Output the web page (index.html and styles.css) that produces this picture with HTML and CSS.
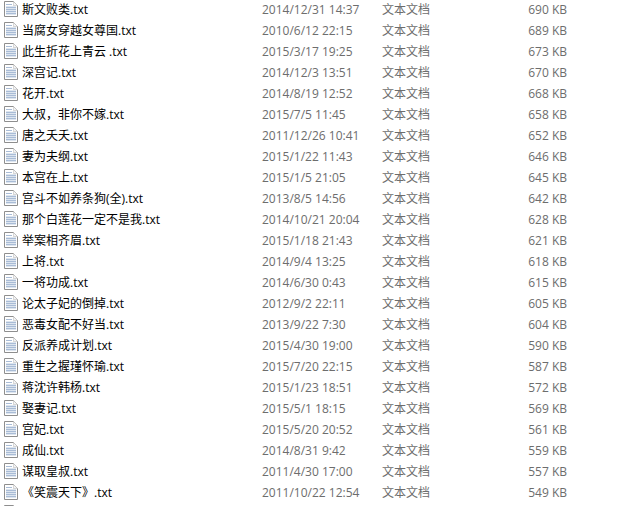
FILE: index.html
```html
<!DOCTYPE html>
<html lang="zh-CN">
<head>
    <meta charset="UTF-8">
    <title>文件列表</title>
    <link rel="stylesheet" href="styles.css">
</head>
<body>
<ul class="file-list" id="files"></ul>

<svg width="0" height="0" class="defs">
    <defs>
        <symbol id="txt-icon" viewBox="0 0 14 16">
            <path d="M0.5 0.5 H9.5 L13.5 4.5 V15.5 H0.5 Z" fill="#fff" stroke="#8e8e8e"/>
            <path d="M9.5 0.5 V4.5 H13.5" fill="#f4f4f4" stroke="#b5b5b5" stroke-dasharray="1 1"/>
            <g stroke="#a9bcd6">
                <line x1="2" y1="3.5" x2="8" y2="3.5"/>
                <line x1="2" y1="6.5" x2="12" y2="6.5"/>
                <line x1="2" y1="8.5" x2="12" y2="8.5"/>
                <line x1="2" y1="10.5" x2="12" y2="10.5"/>
                <line x1="2" y1="12.5" x2="12" y2="12.5"/>
            </g>
            <g stroke="#dde5ef">
                <line x1="2" y1="5.5" x2="12" y2="5.5"/>
                <line x1="2" y1="7.5" x2="12" y2="7.5"/>
                <line x1="2" y1="9.5" x2="12" y2="9.5"/>
                <line x1="2" y1="11.5" x2="12" y2="11.5"/>
                <line x1="2" y1="13.5" x2="12" y2="13.5"/>
            </g>
        </symbol>
    </defs>
</svg>

<script>
    const files = [
        ['斯文败类.txt', '2014/12/31 14:37', '690 KB'],
        ['当腐女穿越女尊国.txt', '2010/6/12 22:15', '689 KB'],
        ['此生折花上青云 .txt', '2015/3/17 19:25', '673 KB'],
        ['深宫记.txt', '2014/12/3 13:51', '670 KB'],
        ['花开.txt', '2014/8/19 12:52', '668 KB'],
        ['大叔，非你不嫁.txt', '2015/7/5 11:45', '658 KB'],
        ['唐之夭夭.txt', '2011/12/26 10:41', '652 KB'],
        ['妻为夫纲.txt', '2015/1/22 11:43', '646 KB'],
        ['本宫在上.txt', '2015/1/5 21:05', '645 KB'],
        ['宫斗不如养条狗(全).txt', '2013/8/5 14:56', '642 KB'],
        ['那个白莲花一定不是我.txt', '2014/10/21 20:04', '628 KB'],
        ['举案相齐眉.txt', '2015/1/18 21:43', '621 KB'],
        ['上将.txt', '2014/9/4 13:25', '618 KB'],
        ['一将功成.txt', '2014/6/30 0:43', '615 KB'],
        ['论太子妃的倒掉.txt', '2012/9/2 22:11', '605 KB'],
        ['恶毒女配不好当.txt', '2013/9/22 7:30', '604 KB'],
        ['反派养成计划.txt', '2015/4/30 19:00', '590 KB'],
        ['重生之握瑾怀瑜.txt', '2015/7/20 22:15', '587 KB'],
        ['蒋沈许韩杨.txt', '2015/1/23 18:51', '572 KB'],
        ['娶妻记.txt', '2015/5/1 18:15', '569 KB'],
        ['宫妃.txt', '2015/5/20 20:52', '561 KB'],
        ['成仙.txt', '2014/8/31 9:42', '559 KB'],
        ['谋取皇叔.txt', '2011/4/30 17:00', '557 KB'],
        ['《笑震天下》.txt', '2011/10/22 12:54', '549 KB'],
        ['', '', '']
    ];

    const list = document.getElementById('files');
    files.forEach(([name, date, size]) => {
        const li = document.createElement('li');
        li.className = 'file-row';
        li.innerHTML =
            '<span class="name"><svg class="icon"><use href="#txt-icon"/></svg><span>' + name + '</span></span>' +
            '<span class="date">' + date + '</span>' +
            '<span class="type">' + (name ? '文本文档' : '') + '</span>' +
            '<span class="size">' + size + '</span>';
        list.appendChild(li);
    });
</script>
</body>
</html>
```

FILE: styles.css
```css
body {
    margin: 0;
    background: #fff;
    font-family: 'Open Sans', 'Noto Sans CJK SC', sans-serif;
    font-size: 12px;
    overflow: hidden;
}

.defs {
    position: absolute;
}

.file-list {
    list-style: none;
    margin: 0;
    padding: 0;
}

.file-row {
    display: grid;
    grid-template-columns: 262px 120px 120px 65px;
    height: 21px;
    line-height: 19px;
    color: #6d6d6d;
    white-space: nowrap;
}

.name {
    display: flex;
    align-items: flex-start;
    gap: 4px;
    padding-left: 4px;
    color: #000;
}

.icon {
    width: 14px;
    height: 16px;
    margin-top: 1px;
    flex-shrink: 0;
}

.size {
    text-align: right;
}
```
